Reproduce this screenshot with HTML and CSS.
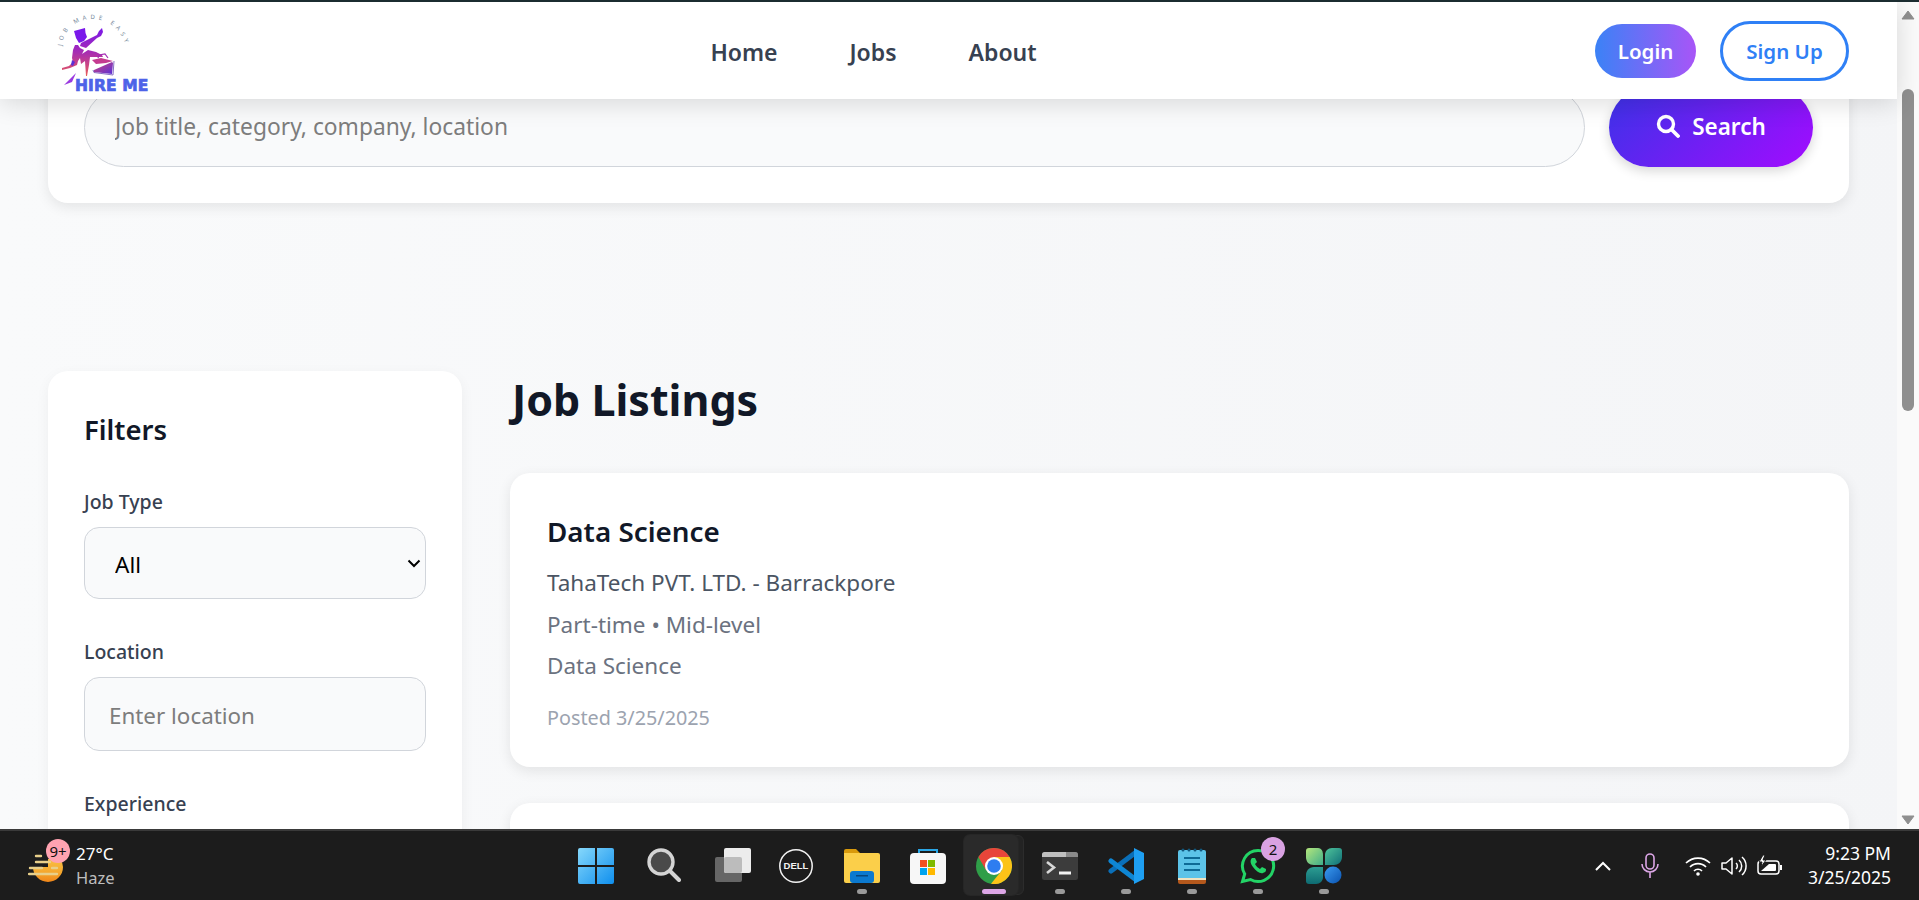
FILE: index.html
```html
<!DOCTYPE html>
<html lang="en">
<head>
<meta charset="utf-8">
<title>Hire Me</title>
<link rel="stylesheet" href="styles.css">
</head>
<body>
<div class="window">
  <div class="viewport">
    <header class="navbar">
      <a class="logo" href="#" aria-label="Hire Me">
        <svg class="logo-svg" viewBox="50 10 100 88" width="100" height="88">
          <defs>
            <linearGradient id="lg1" x1="0" y1="0" x2="0" y2="1">
              <stop offset="0" stop-color="#7a18ea"/>
              <stop offset=".5" stop-color="#a62cb4"/>
              <stop offset="1" stop-color="#ea5c58"/>
            </linearGradient>
            <linearGradient id="lg2" x1="0" y1="0" x2="1" y2="1">
              <stop offset="0" stop-color="#d0427c"/>
              <stop offset="1" stop-color="#5a30d8"/>
            </linearGradient>
            <path id="arc" d="M62 46 C64 14 114 6 126 46"/>
          </defs>
          <text class="logo-arc"><textPath href="#arc" textLength="88" lengthAdjust="spacing">JOB MADE EASY</textPath></text>
          <path fill="#7a18ea" d="M74 31l11-3 .5 5 1.500 4-3 4-5 2-3-5z"/>
          <path fill="url(#lg1)" d="M80 46l6 2 11-10 4-2 2-4-1-4-3 3-2 4-16 8zM78 45l2 3 4 2-2 4 6-4 8 2 6 3 1 2-8 0-5 0-1 8-2 11-1 0-1-15-4 3-1-6-2 3-1 4-7 3-8 2 0-2 7-2 4-4-1-4 1-8 2-5z"/>
          <path fill="#5a30d8" d="M72 60l3 2-2 4-2-1z"/>
          <path fill="none" stroke="#7a60c0" stroke-width=".9" d="M93 70l1 2.500 19 2.500 1-14"/>
          <path fill="url(#lg2)" d="M94 70l18-8 1 1-1 11-18-2z"/>
          <path fill="#c43a90" d="M92 60l9-2 12 3-7 2-10 1z"/>
          <path fill="none" stroke="#a62cb4" stroke-width="1.200" d="M98 58l1-3 6-1 3 4"/>
          <path fill="#9a3ae0" d="M64 85l12-12-4 9z"/>
          <text class="logo-name" x="75" y="91">HIRE ME</text>
        </svg>
      </a>
      <nav class="nav-links">
        <a href="#">Home</a>
        <a href="#">Jobs</a>
        <a href="#">About</a>
      </nav>
      <div class="nav-actions">
        <button class="btn-login">Login</button>
        <button class="btn-signup">Sign Up</button>
      </div>
    </header>

    <main class="page">
      <section class="search-card">
        <input class="search-input" type="text" placeholder="Job title, category, company, location">
        <button class="search-btn">
          <svg viewBox="0 0 24 24" width="24" height="24"><circle cx="10" cy="10" r="7.500" fill="none" stroke="#fff" stroke-width="3.400"/><path d="M15.500 15.500L22 22" stroke="#fff" stroke-width="3.800" stroke-linecap="round"/></svg>
          <span>Search</span>
        </button>
      </section>

      <div class="content">
        <aside class="filters">
          <h3 class="filters-title">Filters</h3>
          <div class="field">
            <label class="field-label">Job Type</label>
            <div class="select-wrap">
              <select class="field-select"><option>All</option></select>
              <svg class="select-chevron" viewBox="0 0 14 9" width="14" height="9"><path d="M1.500 1.500L7 7l5.500-5.500" fill="none" stroke="#000" stroke-width="2"/></svg>
            </div>
          </div>
          <div class="field">
            <label class="field-label">Location</label>
            <input class="field-input" type="text" placeholder="Enter location">
          </div>
          <div class="field">
            <label class="field-label">Experience</label>
          </div>
        </aside>
        <section class="listings">
          <h2 class="listings-title">Job Listings</h2>
          <article class="job-card">
            <h3 class="job-title">Data Science</h3>
            <p class="job-company">TahaTech PVT. LTD. - Barrackpore</p>
            <p class="job-meta">Part-time • Mid-level</p>
            <p class="job-meta">Data Science</p>
            <p class="job-date">Posted 3/25/2025</p>
          </article>
          <article class="job-card job-card-empty"></article>
        </section>
      </div>
    </main>

    <div class="scrollbar">
      <svg class="scroll-arrow" viewBox="0 0 14 10" width="14" height="10"><path d="M7 1l6 8H1z" fill="#8f8f8f" stroke="#8f8f8f" stroke-linejoin="round"/></svg>
      <div class="scroll-track"><div class="scroll-thumb"></div></div>
      <svg class="scroll-arrow" viewBox="0 0 14 10" width="14" height="10"><path d="M7 9L1 1h12z" fill="#8f8f8f" stroke="#8f8f8f" stroke-linejoin="round"/></svg>
    </div>
  </div>

  <footer class="taskbar">
    <div class="tb-left">
      <div class="weather">
        <svg class="weather-icon" viewBox="0 0 36 32" width="36" height="32">
          <defs><linearGradient id="sun" x1="0" y1="0" x2="0" y2="1"><stop offset="0" stop-color="#f9c044"/><stop offset=".6" stop-color="#f5a62c"/><stop offset="1" stop-color="#ef8519"/></linearGradient></defs>
          <path fill="url(#sun)" d="M5 14h30a15 15 0 0 1-30 0zM20 6h12a15 15 0 0 1 3 8H20z"/>
          <g stroke="#e8cf8a" stroke-width="2.400" stroke-linecap="round">
            <path d="M8 3h5M8 9h14M2 15h12M24 15h5M1 21h28"/>
          </g>
        </svg>
        <span class="badge badge-weather">9+</span>
        <div class="weather-text">
          <span class="weather-temp">27°C</span>
          <span class="weather-desc">Haze</span>
        </div>
      </div>
    </div>

    <div class="tb-center">
      <div class="slot slot-wide slot-start">
        <svg viewBox="0 0 36 36" width="36" height="36">
          <defs><linearGradient id="win" x1="0" y1="0" x2="1" y2="1"><stop offset="0" stop-color="#86d8fb"/><stop offset="1" stop-color="#0f8fee"/></linearGradient></defs>
          <path fill="url(#win)" d="M0 2a2 2 0 0 1 2-2h15v17H0zM19 0h15a2 2 0 0 1 2 2v15H19zM0 19h17v17H2a2 2 0 0 1-2-2zM19 19h17v15a2 2 0 0 1-2 2H19z"/>
        </svg>
      </div>
      <div class="slot slot-wide">
        <svg viewBox="0 0 34 36" width="34" height="36"><circle cx="14" cy="14" r="12" fill="#4a4a4a" stroke="#d4d4d4" stroke-width="3.400"/><path d="M23 23l9 9" stroke="#d4d4d4" stroke-width="4" stroke-linecap="round"/></svg>
      </div>
      <div class="slot slot-narrow">
        <svg viewBox="0 0 36 36" width="36" height="36">
          <rect x="0" y="9" width="27" height="25" rx="2" fill="#666"/>
          <rect x="9" y="0" width="27" height="25" rx="2" fill="#ececec"/>
          <rect x="9" y="9" width="18" height="16" rx="2" fill="#bcbcbc"/>
        </svg>
      </div>
      <div class="slot">
        <svg viewBox="0 0 36 36" width="36" height="36"><circle cx="18" cy="18" r="16.200" fill="none" stroke="#f2f2f2" stroke-width="1.500"/><text class="dell" x="18" y="21.200" text-anchor="middle">DELL</text></svg>
      </div>
      <div class="slot">
        <svg viewBox="0 0 36 34" width="36" height="34">
          <path d="M0 2a2 2 0 0 1 2-2h10l4 4h-16z" fill="#d99a0c"/>
          <path d="M0 4h34a2 2 0 0 1 2 2v26a2 2 0 0 1-2 2H2a2 2 0 0 1-2-2z" fill="#fbcf4a"/>
          <rect x="6" y="22" width="24" height="12" rx="3" fill="#0b79cf"/>
          <rect x="12" y="26" width="12" height="1.500" fill="#06477f"/>
        </svg>
        <span class="dot"></span>
      </div>
      <div class="slot">
        <svg viewBox="0 0 36 36" width="36" height="36">
          <path d="M9 7V2h18v5" fill="none" stroke="#2ba7e6" stroke-width="2"/>
          <rect x="0" y="5" width="36" height="31" rx="4" fill="#f7f7f7"/>
          <rect x="10" y="12" width="7" height="7" fill="#f25022"/>
          <rect x="18" y="12" width="7" height="7" fill="#7fba00"/>
          <rect x="10" y="20" width="7" height="7" fill="#00a4ef"/>
          <rect x="18" y="20" width="7" height="7" fill="#ffb900"/>
        </svg>
      </div>
      <div class="slot slot-active">
        <span class="active-stub"></span>
        <span class="active-box"></span>
        <svg class="slot-icon" viewBox="0 0 36 36" width="36" height="36">
          <circle cx="18" cy="18" r="18" fill="#2f9e48"/>
          <path d="M33.600 9H18l7.800 13.500L15 35.800A18 18 0 0 0 33.600 9z" fill="#fcc318"/>
          <path d="M2.400 9A18 18 0 0 1 33.600 9H18l-7.800 13.500z" fill="#e8453a"/>
          <circle cx="18" cy="18" r="9" fill="#fff"/>
          <circle cx="18" cy="18" r="6.800" fill="#2e7df0"/>
        </svg>
        <span class="dot dot-active"></span>
      </div>
      <div class="slot">
        <svg viewBox="0 0 36 28" width="36" height="28">
          <rect width="36" height="28" rx="2.500" fill="#3c3c3c"/>
          <path d="M0 2.500A2.500 2.500 0 0 1 2.500 0H24v5H0z" fill="#bfbfbf"/>
          <path d="M24 0h9.500A2.500 2.500 0 0 1 36 2.500V5H24z" fill="#8a8a8a"/>
          <path d="M5 10l7 5.500-7 5.500" fill="none" stroke="#d8d8d8" stroke-width="2.600"/>
          <rect x="17" y="19.500" width="12" height="3" fill="#f2f2f2"/>
        </svg>
        <span class="dot"></span>
      </div>
      <div class="slot">
        <svg viewBox="0 0 36 36" width="36" height="36">
          <path d="M27 5L3 23" stroke="#0a6fb8" stroke-width="5" stroke-linecap="round"/>
          <path d="M3 13l24 18" stroke="#0e86d4" stroke-width="5" stroke-linecap="round"/>
          <path d="M26 0l10 5v26l-10 5z" fill="#1e9ff2"/>
        </svg>
        <span class="dot"></span>
      </div>
      <div class="slot">
        <svg viewBox="0 0 28 36" width="28" height="36">
          <rect y="2" width="28" height="32" rx="2" fill="#5cc3e8"/>
          <path d="M0 31h28v3a2 2 0 0 1-2 2H2a2 2 0 0 1-2-2z" fill="#b4581c"/>
          <path d="M0 30h28v2H0z" fill="#f0e2c0"/>
          <g fill="#11587e"><circle cx="5" cy="2" r="1.500"/><circle cx="11" cy="2" r="1.500"/><circle cx="17" cy="2" r="1.500"/><circle cx="23" cy="2" r="1.500"/></g>
          <g stroke="#0e6a96" stroke-width="2"><path d="M6 10h16M6 16h16M6 22h16"/></g>
        </svg>
        <span class="dot"></span>
      </div>
      <div class="slot">
        <svg viewBox="0 0 36 36" width="36" height="36">
          <path d="M18 2.500a15.500 15.500 0 1 1-7.500 29L2.500 33.500l2.200-7.500A15.500 15.500 0 0 1 18 2.500z" fill="none" stroke="#23d366" stroke-width="3"/>
          <path d="M12 10c-2 2-2 5 1 9s7 7 10 6 3-2 3-4l-4-2-2 2c-2-1-4-3-5-5l2-2-2-4z" fill="#23d366"/>
        </svg>
        <span class="badge badge-app">2</span>
        <span class="dot"></span>
      </div>
      <div class="slot">
        <svg viewBox="0 0 36 36" width="36" height="36">
          <defs>
            <linearGradient id="pa" x1="0" y1="0" x2="1" y2="1"><stop offset="0" stop-color="#b4e67c"/><stop offset="1" stop-color="#3fae8a"/></linearGradient>
            <linearGradient id="pb" x1="0" y1="0" x2="1" y2="1"><stop offset="0" stop-color="#4fc39a"/><stop offset="1" stop-color="#0f6f78"/></linearGradient>
            <linearGradient id="pc" x1="0" y1="0" x2="0" y2="1"><stop offset="0" stop-color="#2c9d92"/><stop offset="1" stop-color="#0e6b72"/></linearGradient>
            <linearGradient id="pd" x1="0" y1="0" x2="1" y2="1"><stop offset="0" stop-color="#3b9bf0"/><stop offset="1" stop-color="#0a52b0"/></linearGradient>
          </defs>
          <path d="M0 3a3 3 0 0 1 3-3h9c4 0 5 4 5 7v10H8c-5 0-8-3-8-8z" fill="url(#pa)"/>
          <path d="M19 7c0-4 3-7 7-7h7a3 3 0 0 1 3 3v6c0 5-4 8-8 8h-9z" fill="url(#pb)"/>
          <path d="M0 27c0-4 3-8 8-8h9v10c0 4-3 7-7 7H3a3 3 0 0 1-3-3z" fill="url(#pc)"/>
          <circle cx="27" cy="27" r="8.500" fill="url(#pd)"/>
        </svg>
        <span class="dot"></span>
      </div>
    </div>

    <div class="tb-right">
      <svg class="tray" viewBox="0 0 18 12" width="18" height="12"><path d="M2 10l7-7 7 7" fill="none" stroke="#fff" stroke-width="2"/></svg>
      <svg class="tray tray-mic" viewBox="0 0 20 26" width="20" height="26"><rect x="6" y="1" width="8" height="15" rx="4" fill="none" stroke="#dca6e6" stroke-width="1.600"/><path d="M2 11a8 8 0 0 0 16 0M10 19v6" fill="none" stroke="#dca6e6" stroke-width="1.600"/></svg>
      <svg class="tray tray-wifi" viewBox="0 0 26 20" width="26" height="20"><path d="M1 7a17 17 0 0 1 24 0M5 11a11 11 0 0 1 16 0M9 15a5.500 5.500 0 0 1 8 0" fill="none" stroke="#fff" stroke-width="1.700"/><circle cx="13" cy="18" r="1.800" fill="#fff"/></svg>
      <svg class="tray tray-vol" viewBox="0 0 26 22" width="26" height="22"><path d="M1 8h4l6-5v16l-6-5H1z" fill="none" stroke="#fff" stroke-width="1.500" stroke-linejoin="round"/><path d="M15 8a4 4 0 0 1 0 6M18 5a8 8 0 0 1 0 12M21 2a12 12 0 0 1 0 18" fill="none" stroke="#fff" stroke-width="1.500"/></svg>
      <svg class="tray tray-bat" viewBox="0 0 26 22" width="26" height="22"><rect x="1" y="7" width="21" height="13" rx="3" fill="none" stroke="#fff" stroke-width="1.500"/><path d="M23 11h2v5h-2z" fill="#fff"/><path d="M4 17l8-7h6a1 1 0 0 1 1 1v5a1 1 0 0 1-1 1z" fill="#fff"/><path d="M6 1L2 8h3l-1 5 5-7H6l2-5z" fill="#fff" stroke="#1c1c1c"/></svg>
      <div class="clock">
        <span>9:23 PM</span>
        <span>3/25/2025</span>
      </div>
    </div>
  </footer>
</div>
</body>
</html>
```
FILE: styles.css
```css
* { box-sizing: border-box; }
html, body { margin: 0; height: 100%; overflow: hidden; }
body { font-family: "Noto Sans", "Open Sans", sans-serif; color: #111827; }
a { text-decoration: none; color: inherit; }
h2, h3, p { margin: 0; }

.window { display: flex; flex-direction: column; height: 900px; border-top: 2px solid #1b2c30; }
.viewport { position: relative; display: flex; flex: 1; min-height: 0; overflow: hidden; background: linear-gradient(90deg, #f9fafb, #f4f5f7); }

.navbar {
  position: absolute; top: 0; left: 0; right: 22px; height: 97px; z-index: 5;
  display: flex; justify-content: space-between; align-items: center;
  padding: 0 48px 0 50px; background: #fff; box-shadow: 0 4px 24px rgba(0,0,0,.14);
}
.logo { display: block; width: 100px; height: 88px; margin-top: 7px; }
.logo-svg { display: block; }
.logo-arc { font-size: 6px; fill: #74879a; }
.logo-name { font-family: "DejaVu Sans", sans-serif; font-size: 15.5px; font-weight: 700; fill: #4d63e8; stroke: #4d63e8; stroke-width: .7; letter-spacing: .1px; }
.nav-links { display: flex; gap: 72px; font-size: 23px; font-weight: 600; color: #374151; margin: 3px 0 0 2px; }
.nav-actions { display: flex; align-items: center; gap: 24px; }
.btn-login, .btn-signup { font-family: inherit; font-size: 20.5px; font-weight: 600; border-radius: 30px; cursor: pointer; padding: 1px 0 0; }
.btn-login { width: 101px; height: 54px; border: 0; color: #fff; background: linear-gradient(90deg, #3b82f6, #a855f7); }
.btn-signup { width: 129px; height: 60px; border: 3px solid #2f80f6; color: #2f80f6; background: #fff; }

.page { flex: 1; min-width: 0; padding: 49px 48px 0; }
.search-card {
  display: flex; gap: 24px; align-items: center; height: 152px; padding: 36px;
  background: #fff; border-radius: 20px; box-shadow: 0 4px 14px rgba(0,0,0,.09);
}
.search-input {
  flex: 1; min-width: 0; height: 79px; padding: 0 30px 2px; font-family: inherit; font-size: 22.8px;
  background: #f9fafb; border: 1px solid #d1d5db; border-radius: 40px; outline: 0;
}
.search-input::placeholder, .field-input::placeholder { color: #7d7d7d; opacity: 1; }
.search-btn {
  display: flex; align-items: center; justify-content: center; gap: 12px; width: 204px; height: 79px; padding: 0 0 2px;
  border: 0; border-radius: 40px; font-family: inherit; font-size: 22.5px; font-weight: 600; color: #fff;
  background: linear-gradient(135deg, #3b33e8, #a30bff); box-shadow: 0 4px 12px rgba(0,0,0,.16);
}

.content { display: flex; align-items: flex-start; gap: 48px; margin-top: 168px; }
.filters { width: 414px; flex: none; height: 640px; padding: 37px 36px 0; background: #fff; border-radius: 20px; box-shadow: 0 4px 14px rgba(0,0,0,.05); }
.filters-title { font-size: 27.5px; font-weight: 600; line-height: 44px; margin-bottom: 36px; color: #111827; }
.field { margin-bottom: 39px; }
.field-label { display: block; font-size: 19.5px; font-weight: 500; line-height: 27px; margin-bottom: 12px; color: #374151; }
.select-wrap { position: relative; }
.select-chevron { position: absolute; right: 5px; top: 32px; pointer-events: none; }
.field-select, .field-input {
  display: block; width: 100%; font-family: inherit; background-color: #f9fafb; border: 1px solid #d1d5db; border-radius: 15px; outline: 0;
}
.field-select { appearance: none; height: 72px; padding: 2px 30px 0; font-size: 22.5px; color: #000; }
.field-input { height: 74px; padding: 2px 24px 0; font-size: 22.4px; }

.listings { flex: 1; min-width: 0; }
.listings-title { font-size: 43px; font-weight: 700; line-height: 58px; margin: 0 0 44px 2px; color: #111827; }
.job-card { height: 294px; padding: 36px 37px; margin-bottom: 36px; background: #fff; border-radius: 20px; box-shadow: 0 4px 14px rgba(0,0,0,.09); }
.job-title { font-size: 27.8px; font-weight: 600; line-height: 44px; margin-bottom: 9px; color: #111827; }
.job-company, .job-meta { font-size: 22.5px; line-height: 41.5px; }
.job-company { color: #4b5563; }
.job-meta { color: #6b7280; }
.job-date { font-size: 19.8px; line-height: 30px; margin-top: 16px; color: #9ca3af; }

.scrollbar { display: flex; flex-direction: column; align-items: center; width: 22px; flex: none; padding: 8px 0 4px; background: #fafafa; }
.scroll-arrow { flex: none; }
.scroll-track { flex: 1; width: 100%; padding: 0 5px; margin-top: 69px; }
.scroll-thumb { height: 322px; border-radius: 7px; background: #8f8f8f; }

.taskbar {
  flex: none; height: 71px; display: grid; grid-template-columns: 1fr auto 1fr; align-items: center;
  background: #1c1c1c; border-top: 2px solid #3a3a3a; color: #fff;
}
.tb-left { padding-left: 28px; }
.weather { position: relative; display: flex; align-items: center; gap: 12px; }
.weather-icon { margin-top: 6px; }
.weather-text { display: flex; flex-direction: column; font-size: 17px; line-height: 24px; }
.weather-desc { color: #bdbdbd; font-size: 16.5px; }
.badge { position: absolute; display: flex; align-items: center; justify-content: center; width: 24px; height: 24px; border-radius: 50%; color: #111; font-size: 15px; }
.badge-weather { left: 18px; top: -3px; background: #ffa3b1; }
.badge-app { right: 6px; top: 6px; background: #d9a2e2; }

.tb-center { display: flex; height: 69px; }
.slot { position: relative; flex: none; width: 66px; display: flex; align-items: center; justify-content: center; }
.slot-start { padding-left: 2px; }
.slot-wide { margin-right: 3px; }
.slot-narrow { margin-right: -3px; }
.slot-icon { position: relative; }
.dell { font-family: "Liberation Sans", sans-serif; font-size: 9.5px; font-weight: 700; fill: #f2f2f2; }
.dot { position: absolute; left: 28px; bottom: 6px; width: 10px; height: 5px; border-radius: 3px; background: #9a9a9a; }
.dot-active { left: 21px; width: 24px; background: #dca6e6; }
.active-box { position: absolute; left: 3px; top: 4px; width: 54px; height: 60px; border-radius: 6px; background: #2a2a2a; box-shadow: 0 0 0 1px #262626; }
.active-stub { position: absolute; left: 50px; top: 4px; width: 13px; height: 60px; border-radius: 6px; background: #232323; border: 1px solid #2c2c2c; }

.tb-right { display: flex; align-items: center; justify-content: flex-end; padding-right: 28px; }
.tray { flex: none; }
.tray-mic { margin-left: 28px; }
.tray-wifi { margin-left: 25px; }
.tray-vol { margin-left: 10px; }
.tray-bat { margin-left: 10px; margin-bottom: 2px; }
.clock { display: flex; flex-direction: column; align-items: flex-end; margin-left: 25px; font-size: 17.5px; line-height: 23.5px; }
```
